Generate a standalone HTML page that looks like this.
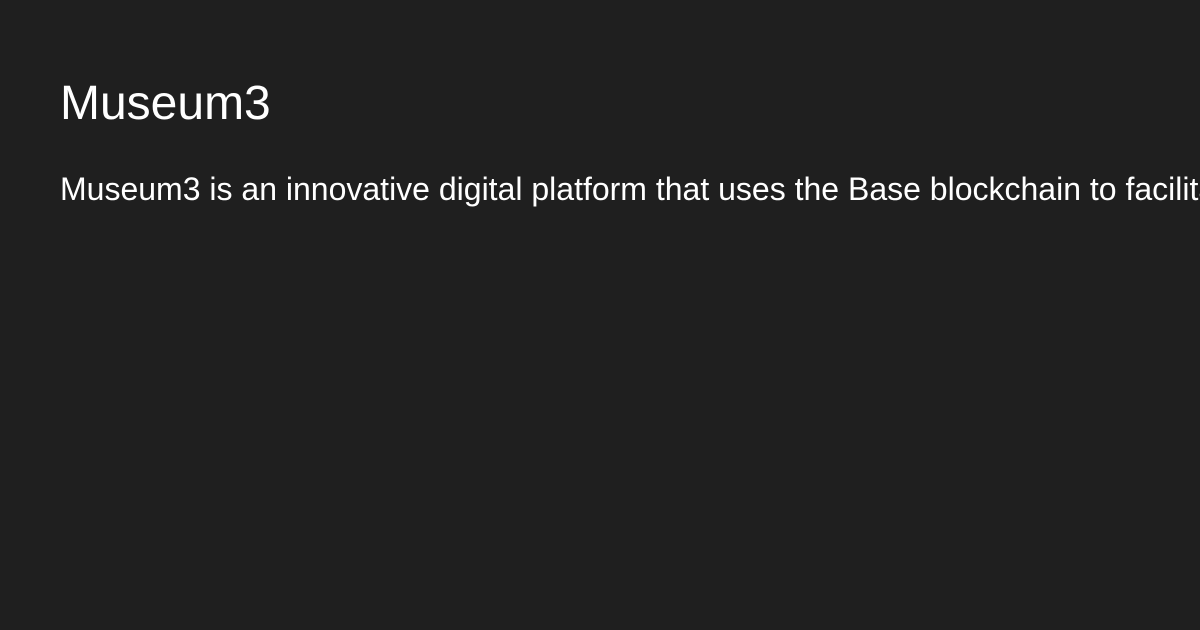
<!DOCTYPE html>
<html><head><meta charset="utf-8"><style>
html,body{margin:0;padding:0;width:1200px;height:630px;overflow:hidden;background:#1f1f1f;}
body{font-family:"Liberation Sans",Arial,sans-serif;color:#fff;}
h1{position:absolute;left:60px;top:76px;margin:0;font-size:48px;font-weight:400;line-height:56px;white-space:nowrap;}
p{position:absolute;left:60px;top:171px;margin:0;font-size:32px;line-height:37px;white-space:nowrap;}
</style></head><body>
<h1>Museum3</h1>
<p>Museum3 is an innovative digital platform that uses the Base blockchain to facilitate</p>
</body></html>
